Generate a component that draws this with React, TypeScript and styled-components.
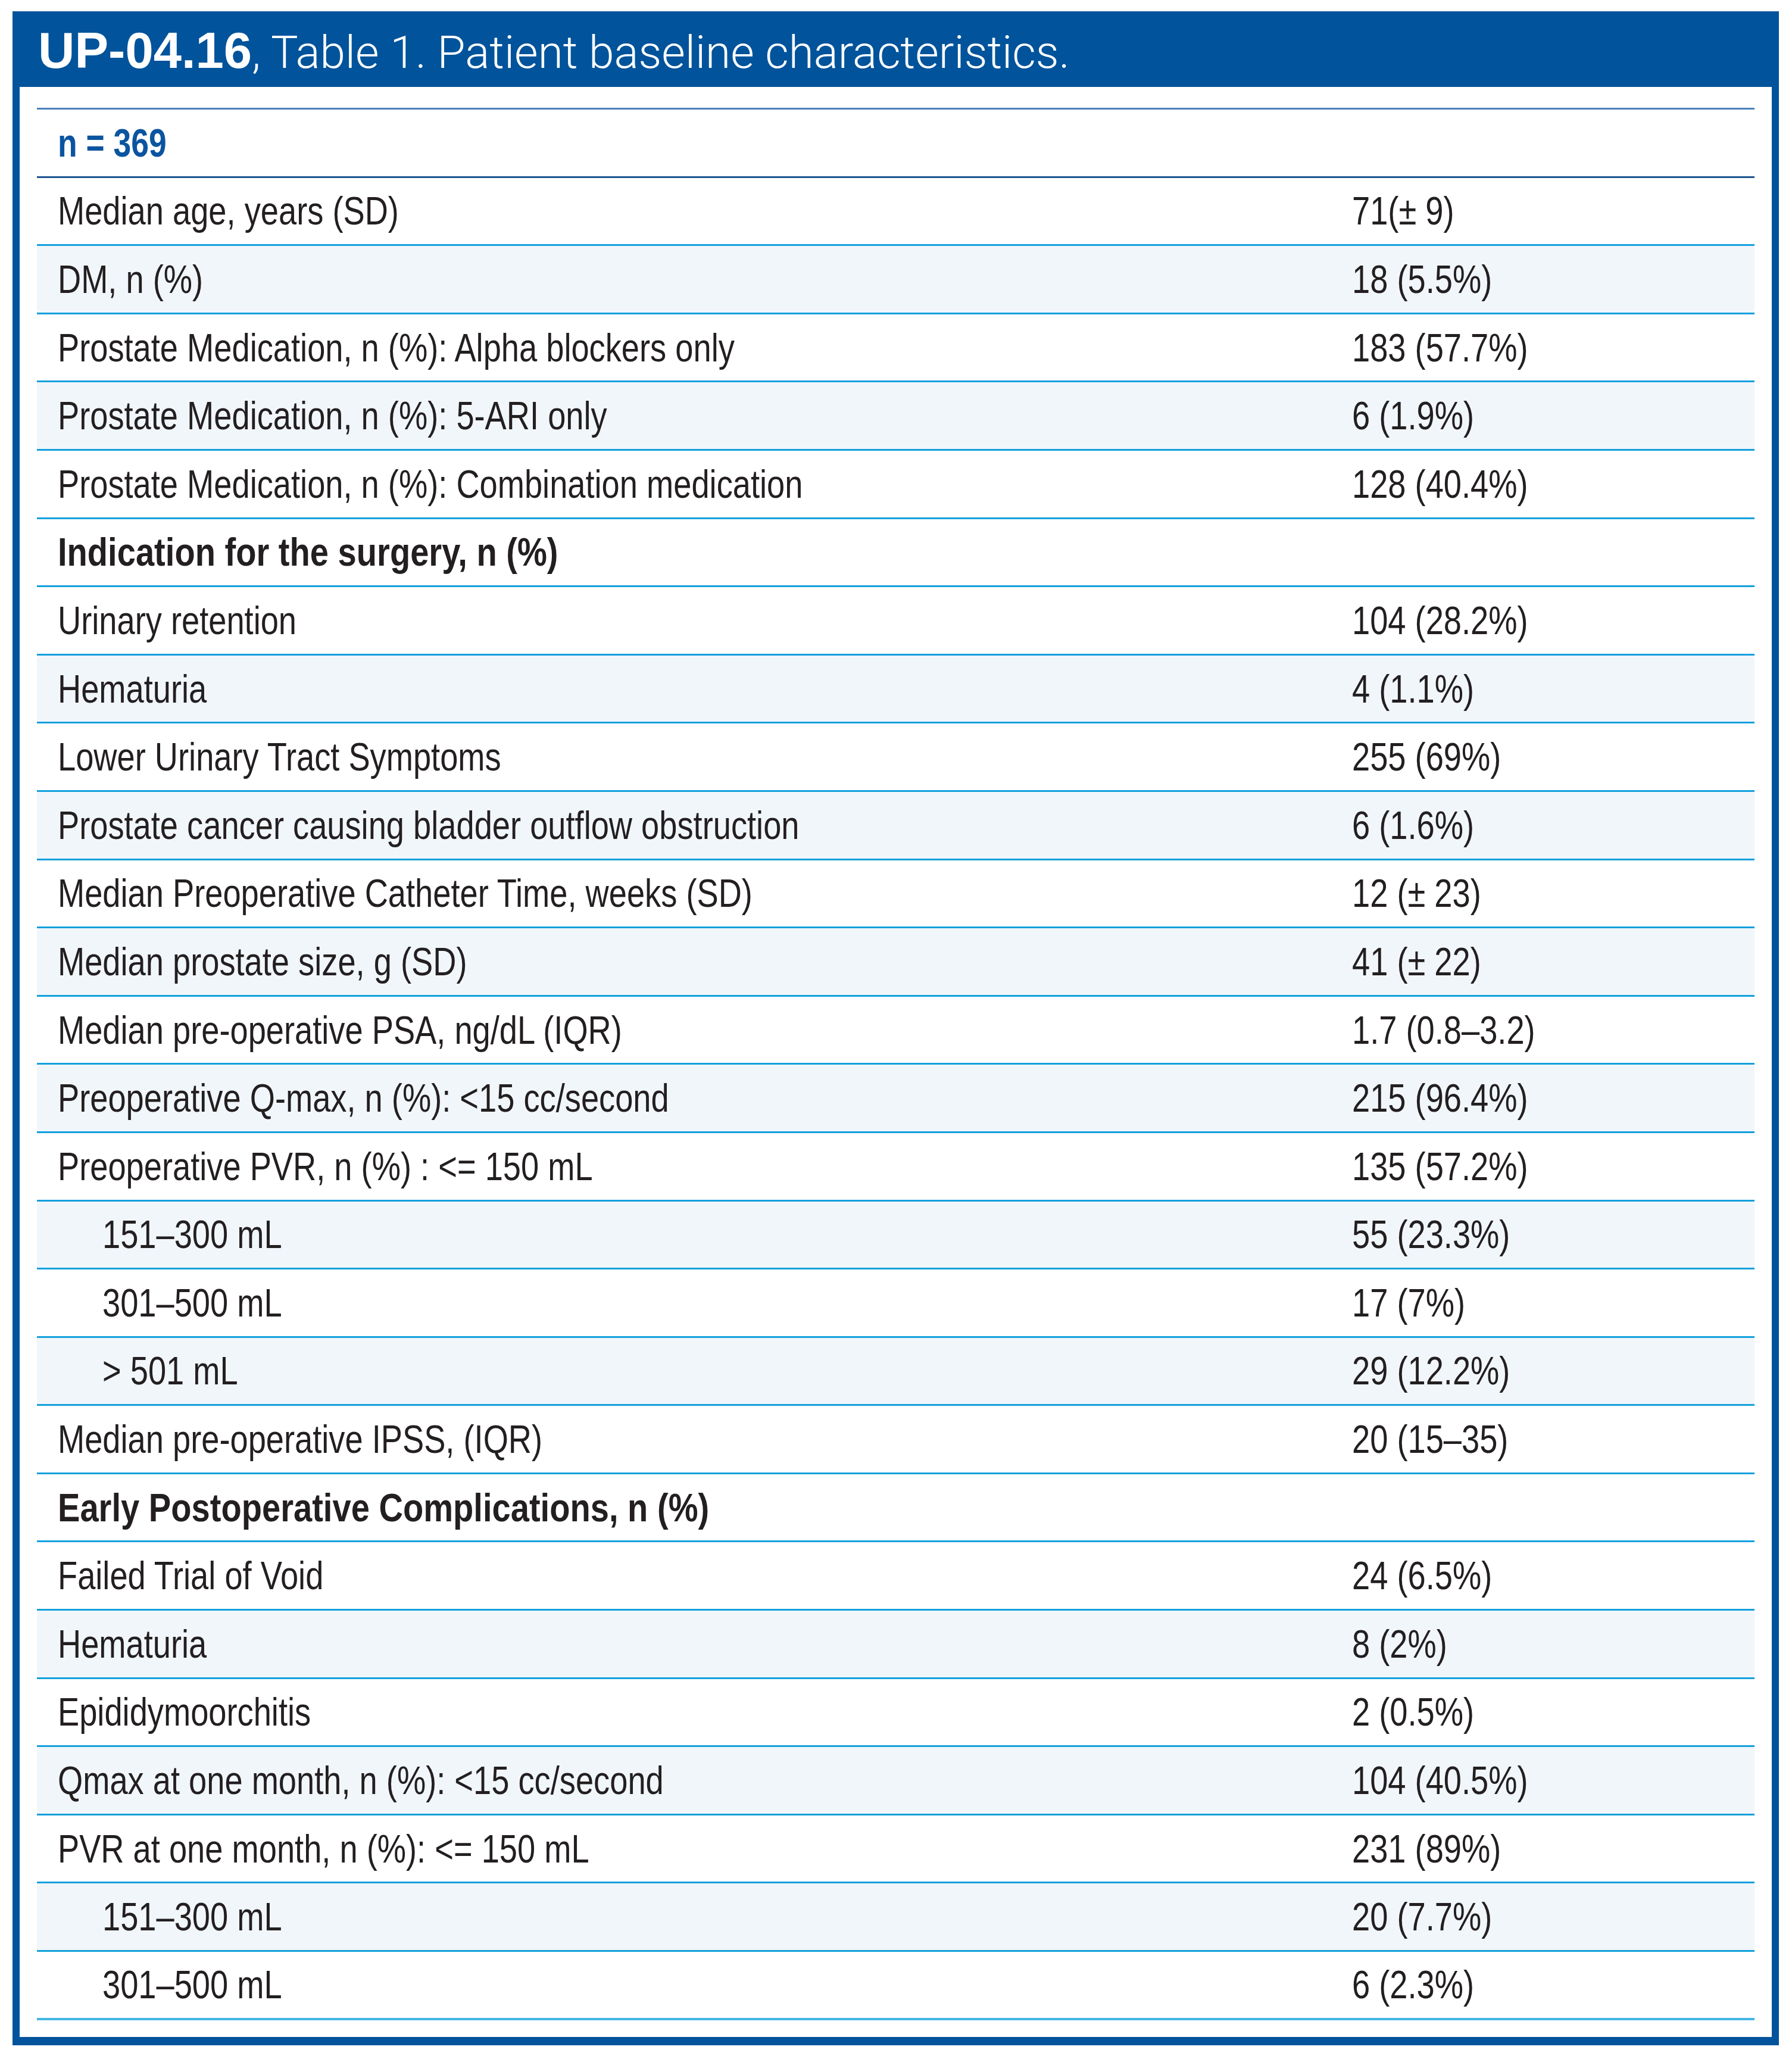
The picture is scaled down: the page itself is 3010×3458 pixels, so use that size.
import React from 'react';
import styled, { createGlobalStyle } from 'styled-components';

const navy = '#01539b';
const ink = '#231f20';
const rule = '#12a0dc';
const shade = '#f1f6fb';

const GlobalStyle = createGlobalStyle`
  html, body {
    margin: 0;
    padding: 0;
    background: #ffffff;
  }
`;

type Row = {
  label: string;
  value?: string;
  bold?: boolean;
  indent?: boolean;
};

const rows: Row[] = [
  { label: 'Median age, years (SD)', value: '71(± 9)' },
  { label: 'DM, n (%)', value: '18 (5.5%)' },
  { label: 'Prostate Medication, n (%): Alpha blockers only', value: '183 (57.7%)' },
  { label: 'Prostate Medication, n (%): 5-ARI only', value: '6 (1.9%)' },
  { label: 'Prostate Medication, n (%): Combination medication', value: '128 (40.4%)' },
  { label: 'Indication for the surgery, n (%)', bold: true },
  { label: 'Urinary retention', value: '104 (28.2%)' },
  { label: 'Hematuria', value: '4 (1.1%)' },
  { label: 'Lower Urinary Tract Symptoms', value: '255 (69%)' },
  { label: 'Prostate cancer causing bladder outflow obstruction', value: '6 (1.6%)' },
  { label: 'Median Preoperative Catheter Time, weeks (SD)', value: '12 (± 23)' },
  { label: 'Median prostate size, g (SD)', value: '41 (± 22)' },
  { label: 'Median pre-operative PSA, ng/dL (IQR)', value: '1.7 (0.8–3.2)' },
  { label: 'Preoperative Q-max, n (%): <15 cc/second', value: '215 (96.4%)' },
  { label: 'Preoperative PVR, n (%) : <= 150 mL', value: '135 (57.2%)' },
  { label: '151–300 mL', value: '55 (23.3%)', indent: true },
  { label: '301–500 mL', value: '17 (7%)', indent: true },
  { label: '> 501 mL', value: '29 (12.2%)', indent: true },
  { label: 'Median pre-operative IPSS, (IQR)', value: '20 (15–35)' },
  { label: 'Early Postoperative Complications, n (%)', bold: true },
  { label: 'Failed Trial of Void', value: '24 (6.5%)' },
  { label: 'Hematuria', value: '8 (2%)' },
  { label: 'Epididymoorchitis', value: '2 (0.5%)' },
  { label: 'Qmax at one month, n (%): <15 cc/second', value: '104 (40.5%)' },
  { label: 'PVR at one month, n (%): <= 150 mL', value: '231 (89%)' },
  { label: '151–300 mL', value: '20 (7.7%)', indent: true },
  { label: '301–500 mL', value: '6 (2.3%)', indent: true },
];

export default function App() {
  return (
    <>
      <GlobalStyle />
      <Frame>
        <Header>
          <Code>UP-04.16</Code>
          <Caption>, Table 1. Patient baseline characteristics.</Caption>
        </Header>
        <Body>
          <Table>
            <CountRow>
              <Narrow $bold $scale={0.81} $color="#0b55a0">
                n = 369
              </Narrow>
            </CountRow>
            {rows.map((row, i) => (
              <DataRow
                key={i}
                $shaded={i % 2 === 1 && !row.bold}
                $last={i === rows.length - 1}
              >
                <Label $indent={row.indent}>
                  <Narrow $bold={row.bold}>{row.label}</Narrow>
                </Label>
                <Value>{row.value && <Narrow>{row.value}</Narrow>}</Value>
              </DataRow>
            ))}
          </Table>
        </Body>
      </Frame>
    </>
  );
}

const Frame = styled.div`
  margin: 19px 0 0 21px;
  width: 2967px;
  box-sizing: border-box;
  border: 12px solid ${navy};
  border-top: none;
  border-bottom-width: 14px;
  background: #ffffff;
`;

const Header = styled.div`
  display: flex;
  align-items: baseline;
  height: 127px;
  box-sizing: border-box;
  margin: 0 -12px;
  padding: 18px 0 0 43px;
  background: ${navy};
  color: #ffffff;
  line-height: 96px;
  white-space: nowrap;
`;

const Code = styled.span`
  font-family: 'Liberation Sans', Arial, sans-serif;
  font-weight: 700;
  font-size: 85px;
`;

const Caption = styled.span`
  font-family: Roboto, 'Liberation Sans', Arial, sans-serif;
  font-weight: 300;
  font-size: 76.5px;
`;

const Body = styled.div`
  padding: 35px 29px 28px 29px;
`;

const Table = styled.div`
  display: flex;
  flex-direction: column;
  border-top: 3px solid #4a80b9;
  font-family: 'Liberation Sans', Arial, sans-serif;
  font-size: 66px;
  color: ${ink};
`;

// Condensed face: the source uses Helvetica Condensed, which is not installed.
const Narrow = styled.span<{ $bold?: boolean; $color?: string; $scale?: number }>`
  display: inline-block;
  white-space: nowrap;
  font-weight: ${(p) => (p.$bold ? 700 : 400)};
  color: ${(p) => p.$color ?? 'inherit'};
  transform: scaleX(${(p) => p.$scale ?? (p.$bold ? 0.85 : 0.822)});
  transform-origin: 0 50%;
`;

const CountRow = styled.div`
  display: flex;
  align-items: center;
  height: 114.6px;
  box-sizing: border-box;
  padding-left: 35px;
  border-bottom: 3px solid #1c5590;
  box-shadow: 0 1px 0 #bcd3ea;
`;

const DataRow = styled.div<{ $shaded?: boolean; $last?: boolean }>`
  display: grid;
  grid-template-columns: 2176px 1fr;
  align-items: center;
  height: 114.6px;
  box-sizing: border-box;
  background: ${(p) => (p.$shaded ? shade : '#ffffff')};
  border-bottom: ${(p) => (p.$last ? '4px solid #44b6e4' : `3px solid ${rule}`)};
`;

const Label = styled.div<{ $indent?: boolean }>`
  padding-left: ${(p) => (p.$indent ? 110 : 35)}px;
`;

const Value = styled.div`
  padding-left: 33px;
`;
